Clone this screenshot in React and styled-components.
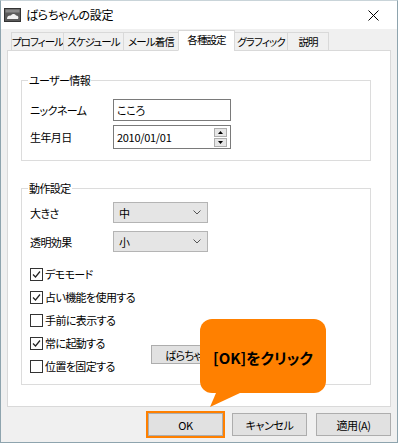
import React from 'react'
import styled, { createGlobalStyle } from 'styled-components'

const GlobalStyle = createGlobalStyle`
  html, body {
    margin: 0;
    padding: 0;
    background: #ffffff;
  }
  body {
    font-family: "Noto Sans CJK JP", "Noto Sans", sans-serif;
    font-feature-settings: "palt";
    color: #000;
  }
`

const Window = styled.div`
  position: relative;
  box-sizing: border-box;
  width: 398px;
  height: 443px;
  border: 1px solid #8ea4ae;
  border-top-color: #c9d4d9;
  background: #f0f0f0;
  display: flex;
  flex-direction: column;
`

const TitleBar = styled.div`
  height: 28px;
  flex: 0 0 auto;
  background: #ffffff;
  display: flex;
  align-items: center;
  padding: 0 0 0 3px;
  font-size: 12px;
`

const TitleText = styled.span`
  margin-left: 5px;
  flex: 1 1 auto;
  line-height: 14px;
  letter-spacing: -0.3px;
`

const CloseButton = styled.div`
  width: 46px;
  height: 28px;
  display: flex;
  align-items: center;
  justify-content: center;
  margin-right: 1px;
`

const Body = styled.div`
  flex: 1 1 auto;
  display: flex;
  flex-direction: column;
  padding: 0 6px;
`

const TabStrip = styled.div`
  position: relative;
  z-index: 1;
  height: 22px;
  margin-bottom: -1px;
  padding-left: 5px;
  display: flex;
  align-items: flex-end;
`

const Tab = styled.div`
  box-sizing: border-box;
  width: ${p => p.$w}px;
  height: ${p => (p.$active ? 21 : 19)}px;
  margin-left: -1px;
  border: 1px solid #d9d9d9;
  border-bottom-color: ${p => (p.$active ? '#ffffff' : '#d9d9d9')};
  background: ${p => (p.$active ? '#ffffff' : '#f0f0f0')};
  font-size: 10.5px;
  letter-spacing: -0.9px;
  white-space: nowrap;
  display: flex;
  align-items: center;
  justify-content: center;
  padding-bottom: ${p => (p.$active ? 2 : 0)}px;
`

const Panel = styled.div`
  box-sizing: border-box;
  height: 357px;
  background: #ffffff;
  border: 1px solid #d9d9d9;
  padding: 22px 0 0 13px;
  font-size: 11px;
  letter-spacing: -0.6px;
`

const Group = styled.fieldset`
  box-sizing: border-box;
  width: 350px;
  margin: ${p => p.$top}px 0 0 0;
  padding: ${p => p.$pad};
  border: 1px solid #dcdcdc;
  min-width: 0;
`

const Legend = styled.legend`
  font-size: 11px;
  line-height: 14px;
  padding: 0 1px;
  margin-left: -2px;
`

const Rows = styled.div`
  display: flex;
  flex-direction: column;
  gap: ${p => p.$gap}px;
`

const FieldRow = styled.div`
  display: flex;
  align-items: center;
`

const Label = styled.div`
  width: 83px;
  white-space: nowrap;
`

const TextBox = styled.div`
  box-sizing: border-box;
  width: 118px;
  height: ${p => p.$h}px;
  border: 1px solid #7a7a7a;
  background: #fff;
  display: flex;
  align-items: center;
  padding-left: 3px;
  letter-spacing: -0.3px;
`

const Spinner = styled.div`
  margin-left: auto;
  margin-right: 3px;
  display: flex;
  flex-direction: column;
  gap: 1px;
`

const SpinBtn = styled.div`
  box-sizing: border-box;
  width: 13px;
  height: 9px;
  background: #e6e6e6;
  border: 1px solid #adadad;
  display: flex;
  align-items: center;
  justify-content: center;
`

const Select = styled.div`
  box-sizing: border-box;
  width: 95px;
  height: 21px;
  background: #e5e5e5;
  border: 1px solid #b4b4b4;
  display: flex;
  align-items: center;
  padding: 0 6px 0 5px;
  justify-content: space-between;
`

const Checks = styled.div`
  display: flex;
  flex-direction: column;
  gap: 3px;
  margin-top: 12px;
`

const CheckRow = styled.label`
  height: 20px;
  display: flex;
  align-items: center;
  white-space: nowrap;
`

const Box = styled.span`
  box-sizing: border-box;
  width: 13px;
  height: 13px;
  border: 1px solid #333333;
  background: #fff;
  margin-right: 2px;
  display: flex;
  align-items: center;
  justify-content: center;
`

const SplitRow = styled.div`
  display: flex;
  align-items: center;
`

const SplitCol = styled.div`
  width: 121px;
  display: flex;
  flex-direction: column;
  gap: 3px;
`

const WideButton = styled.div`
  box-sizing: border-box;
  width: 104px;
  height: 19px;
  background: #e1e1e1;
  border: 1px solid #adadad;
  display: flex;
  align-items: center;
  justify-content: center;
  white-space: nowrap;
`

const Footer = styled.div`
  display: flex;
  justify-content: flex-end;
  gap: 9px;
  padding: 6px 0 0 0;
`

const Button = styled.div`
  box-sizing: border-box;
  width: 75px;
  height: 23px;
  background: #e1e1e1;
  border: 1px solid #adadad;
  font-size: 11px;
  letter-spacing: -0.4px;
  display: flex;
  align-items: center;
  justify-content: center;
  outline: ${p => (p.$focus ? '2px solid #ff8000' : 'none')};
  outline-offset: 0;
`

const Callout = styled.div`
  position: absolute;
  left: 199px;
  top: 318px;
  width: 126px;
  height: 74px;
  border-radius: 12px;
  background: #ff8000;
  display: flex;
  align-items: center;
  justify-content: center;
  font-size: 15px;
  font-weight: bold;
  padding-top: 2px;
  box-sizing: border-box;
  z-index: 3;
`

const Tail = styled.svg`
  position: absolute;
  left: 204px;
  top: 385px;
  z-index: 3;
`

function Check({ checked, children }) {
  return (
    <CheckRow>
      <Box>
        {checked && (
          <svg width="9" height="9" viewBox="0 0 9 9">
            <path d="M1 4.5 L3.5 7 L8 1.5" fill="none" stroke="#222" strokeWidth="1.2" />
          </svg>
        )}
      </Box>
      {children}
    </CheckRow>
  )
}

const tabs = [
  { name: 'プロフィール', w: 53 },
  { name: 'スケジュール', w: 61 },
  { name: 'メール着信', w: 56 },
  { name: '各種設定', w: 57, active: true },
  { name: 'グラフィック', w: 54 },
  { name: '説明', w: 42 }
]

export default function App() {
  return (
    <>
      <GlobalStyle />
      <Window>
        <TitleBar>
          <svg width="17" height="14" viewBox="0 0 17 14">
            <rect x="0.5" y="0.5" width="16" height="13" fill="#5a5a5a" stroke="#333" />
            <rect x="1.5" y="1.5" width="14" height="3" fill="#8a8a8a" />
            <path d="M3 11 C3 8 5 7 7 7.5 C8 5.5 11 5.5 12 7.5 C14 7.5 15 9 14 11 Z" fill="#f2f2f2" />
          </svg>
          <TitleText>ばらちゃんの設定</TitleText>
          <CloseButton>
            <svg width="11" height="11" viewBox="0 0 11 11">
              <path d="M0.5 0.5 L10.5 10.5 M10.5 0.5 L0.5 10.5" stroke="#000" strokeWidth="1" />
            </svg>
          </CloseButton>
        </TitleBar>
        <Body>
          <TabStrip>
            {tabs.map(t => (
              <Tab key={t.name} $w={t.w} $active={t.active}>{t.name}</Tab>
            ))}
          </TabStrip>
          <Panel>
            <Group $top={0} $pad="12px 0 11px 8px">
              <Legend>ユーザー情報</Legend>
              <Rows $gap={4}>
                <FieldRow>
                  <Label>ニックネーム</Label>
                  <TextBox $h={22}>こころ</TextBox>
                </FieldRow>
                <FieldRow>
                  <Label>生年月日</Label>
                  <TextBox $h={24}>
                    2010/01/01
                    <Spinner>
                      <SpinBtn>
                        <svg width="5" height="3" viewBox="0 0 5 3"><path d="M0 3 L2.5 0 L5 3 Z" fill="#000" /></svg>
                      </SpinBtn>
                      <SpinBtn>
                        <svg width="5" height="3" viewBox="0 0 5 3"><path d="M0 0 L2.5 3 L5 0 Z" fill="#000" /></svg>
                      </SpinBtn>
                    </Spinner>
                  </TextBox>
                </FieldRow>
              </Rows>
            </Group>
            <Group $top={20} $pad="7px 0 8px 8px">
              <Legend>動作設定</Legend>
              <Rows $gap={8}>
                <FieldRow>
                  <Label>大きさ</Label>
                  <Select>
                    中
                    <svg width="8" height="5" viewBox="0 0 8 5"><path d="M0.5 0.5 L4 4 L7.5 0.5" fill="none" stroke="#555" /></svg>
                  </Select>
                </FieldRow>
                <FieldRow>
                  <Label>透明効果</Label>
                  <Select>
                    小
                    <svg width="8" height="5" viewBox="0 0 8 5"><path d="M0.5 0.5 L4 4 L7.5 0.5" fill="none" stroke="#555" /></svg>
                  </Select>
                </FieldRow>
              </Rows>
              <Checks>
                <Check checked>デモモード</Check>
                <Check checked>占い機能を使用する</Check>
                <Check>手前に表示する</Check>
                <SplitRow>
                  <SplitCol>
                    <Check checked>常に起動する</Check>
                    <Check>位置を固定する</Check>
                  </SplitCol>
                  <WideButton>ばらちゃんを隠す</WideButton>
                </SplitRow>
              </Checks>
            </Group>
          </Panel>
          <Footer>
            <Button $focus>OK</Button>
            <Button>キャンセル</Button>
            <Button>適用(A)</Button>
          </Footer>
        </Body>
        <Callout>[OK]をクリック</Callout>
        <Tail width="52" height="22" viewBox="0 0 52 22">
          <path d="M14 0 L50 0 L5 21 Z" fill="#ff8000" />
        </Tail>
      </Window>
    </>
  )
}
